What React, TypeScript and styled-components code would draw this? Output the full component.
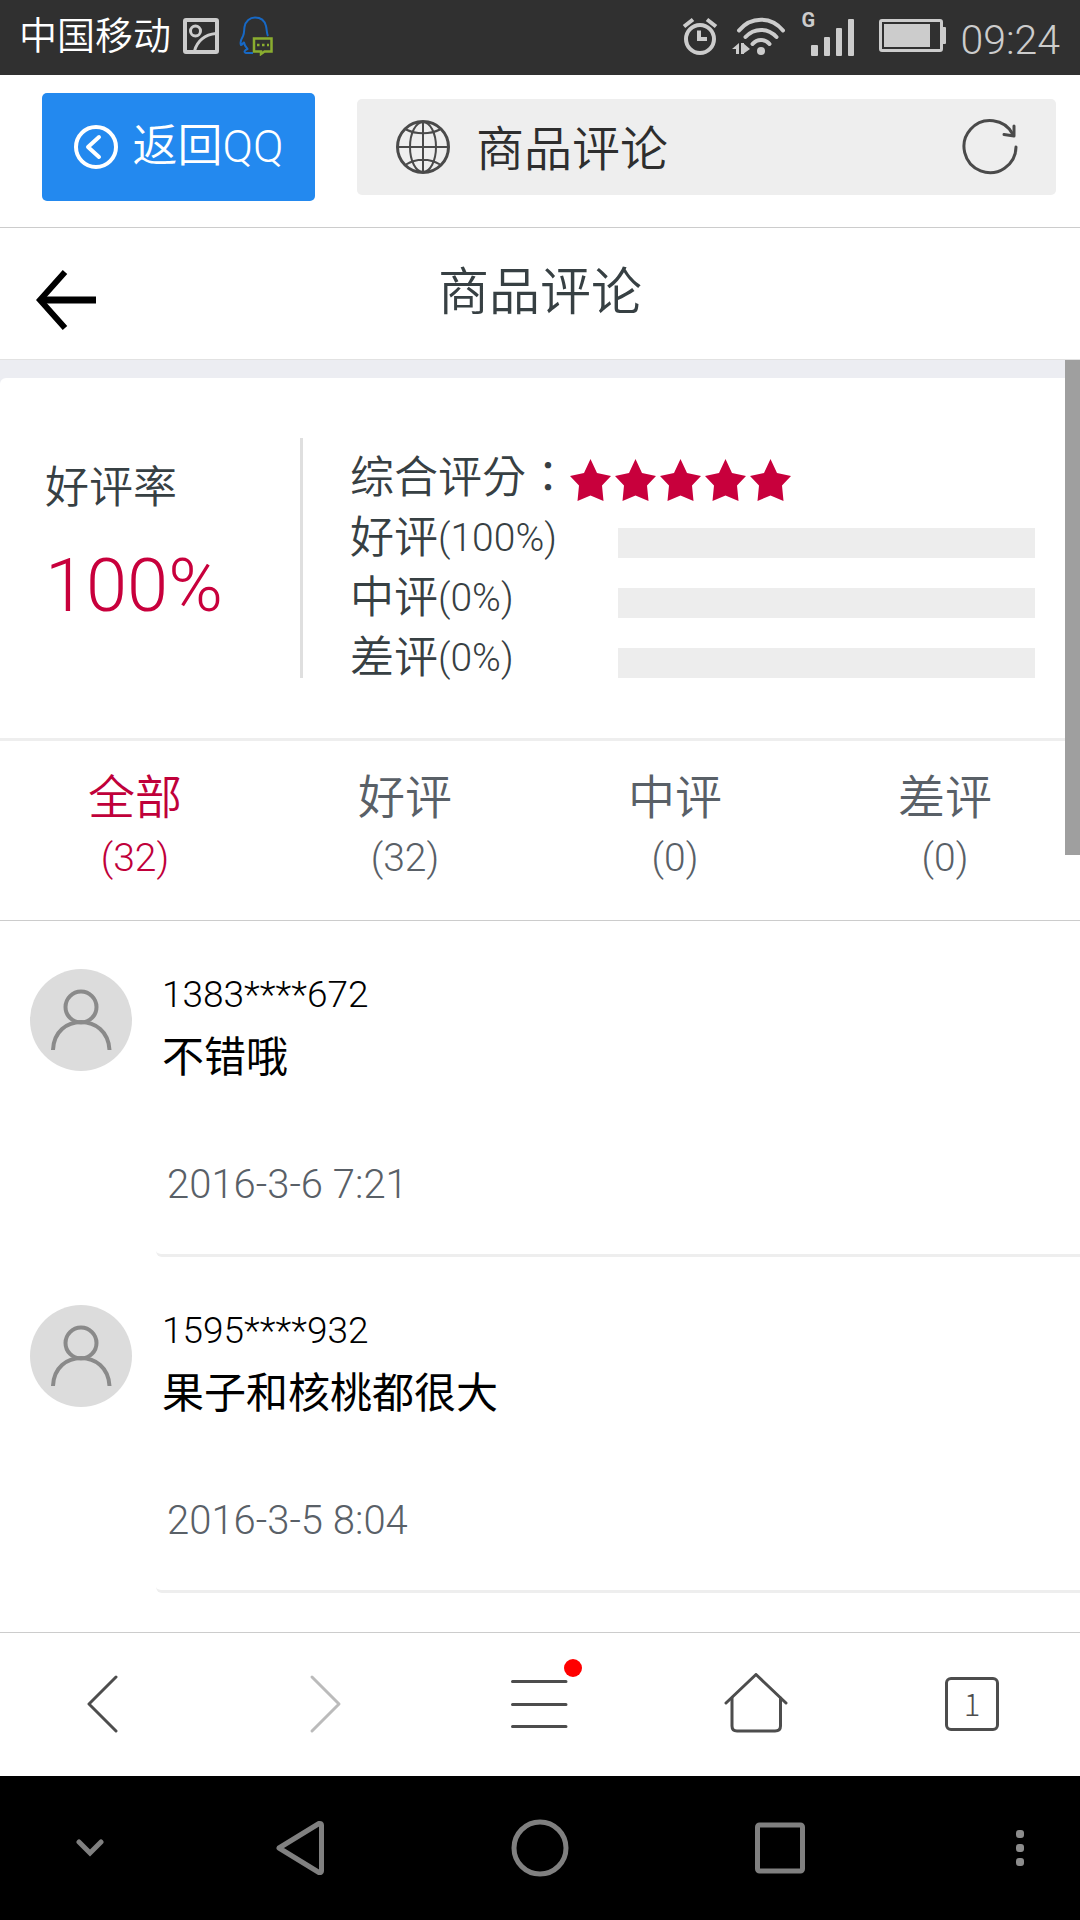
import React, { useState } from "react";
import styled, { createGlobalStyle } from "styled-components";

const GlobalStyle = createGlobalStyle`
  *, *::before, *::after { box-sizing: border-box; }
  body { margin: 0; background: #fff; }
  body, button, input {
    font-family: Roboto, "Noto Sans CJK SC", sans-serif;
    font-weight: 350;
  }
  button { border: 0; padding: 0; margin: 0; background: none; cursor: pointer; color: inherit; }
  h1, p, ul { margin: 0; padding: 0; }
  ul { list-style: none; }
  svg { display: block; flex: none; }
`;

const Screen = styled.div`
  display: flex;
  flex-direction: column;
  min-height: 100vh;
`;

const StatusBar = styled.header`
  display: flex;
  align-items: center;
  justify-content: space-between;
  height: 75px;
  padding: 0 20px 4px 19px;
  background: #303030;
  color: #fff;
`;

const StatusGroup = styled.div<{ $gap: number }>`
  display: flex;
  align-items: center;
  gap: ${(p) => p.$gap}px;
`;

const Carrier = styled.span`
  margin-right: -8px;
  font-size: 38px;
  line-height: 66px;
`;

const Clock = styled.time`
  padding-top: 8px;
  font-size: 41px;
  line-height: 48px;
  color: #ccc;
`;

const BrowserBar = styled.div`
  display: flex;
  align-items: center;
  gap: 42px;
  height: 153px;
  padding: 0 24px 8px 42px;
  border-bottom: 1px solid #ccc;
`;

const BackToQQ = styled.button`
  display: flex;
  align-items: center;
  justify-content: center;
  gap: 15px;
  width: 273px;
  height: 108px;
  border-radius: 5px;
  background: #2389ef;
  color: #fff;
  font-size: 45px;
  line-height: 60px;
`;

const AddressBox = styled.div`
  display: flex;
  flex: 1;
  align-items: center;
  min-width: 0;
  height: 96px;
  padding: 0 38px 0 39px;
  border-radius: 5px;
  background: #eee;
`;

const AddressInput = styled.input`
  flex: 1;
  min-width: 0;
  height: 72px;
  padding: 0 26px 4px;
  border: 0;
  outline: 0;
  background: transparent;
  color: #2e2e2e;
  font-size: 48px;
`;

const PageHeader = styled.div`
  display: grid;
  grid-template-columns: 96px 1fr 96px;
  align-items: center;
  height: 132px;
  border-bottom: 1px solid #e2e2e2;
`;

const BackButton = styled.button`
  display: flex;
  justify-content: flex-end;
  padding-top: 12px;
`;

const PageTitle = styled.h1`
  padding-bottom: 2px;
  color: #374043;
  font-size: 51px;
  font-weight: 350;
  line-height: 72px;
  text-align: center;
`;

const Content = styled.main`
  position: relative;
  flex: 1;
  padding-top: 18px;
  background: linear-gradient(#ecedf2 40px, #fff 40px);
`;

const ScrollThumb = styled.div`
  position: absolute;
  top: 0;
  right: 0;
  width: 15px;
  height: 495px;
  background: #9f9f9f;
`;

const Summary = styled.section`
  display: flex;
  padding: 60px 45px;
  border-bottom: 3px solid #eee;
  border-radius: 6px 0 0 0;
  background: #fff;
  color: #374043;
  font-size: 44px;
`;

const RateBlock = styled.div`
  display: flex;
  flex-direction: column;
  gap: 20px;
  width: 258px;
  padding-top: 20px;
  border-right: 3px solid #dfdfdf;
  line-height: 60px;
`;

const Rate = styled.strong`
  color: #c8003c;
  font-size: 74px;
  font-weight: 350;
  line-height: 96px;
`;

const Breakdown = styled.div`
  display: flex;
  flex: 1;
  flex-direction: column;
  padding-left: 47px;
`;

const BreakdownRow = styled.div`
  display: flex;
  align-items: flex-end;
  height: 60px;
`;

const RowLabel = styled.span`
  display: flex;
  align-items: center;
  flex: 0 0 268px;
  line-height: 40px;
`;

const ScoreLabel = styled.span`
  flex: none;
  font-family: "Noto Sans CJK TC", sans-serif;
  line-height: 48px;
`;

const Share = styled.span`
  font-size: 39px;
`;

const Track = styled.div`
  flex: 1;
  height: 30px;
  background: #ededed;
`;

const Stars = styled.div`
  display: flex;
  gap: 4px;
  margin-bottom: -3px;
`;

const Tabs = styled.nav`
  display: grid;
  grid-template-columns: repeat(4, 1fr);
  height: 180px;
  border-bottom: 1px solid #ccc;
  background: #fff;
`;

const Tab = styled.button<{ $active: boolean }>`
  display: flex;
  flex-direction: column;
  align-items: center;
  padding-top: 27px;
  color: ${(p) => (p.$active ? "#c0003a" : "#596067")};
  font-size: 47px;
  line-height: 60px;
`;

const TabCount = styled.span`
  font-size: 39px;
`;

const ReviewList = styled.ul`
  background: #fff;
`;

const Review = styled.li`
  display: flex;
  gap: 24px;
  padding-left: 30px;
`;

const Avatar = styled.div`
  flex: none;
  width: 102px;
  height: 102px;
  margin-top: 48px;
  border-radius: 50%;
  background: #dcdcdc;
`;

const ReviewBody = styled.div`
  display: flex;
  flex: 1;
  flex-direction: column;
  height: 336px;
  padding: 42px 0 0 6px;
  border-bottom: 3px solid #eee;
  border-radius: 0 0 0 6px;
  color: #000;
`;

const Author = styled.span`
  font-size: 37px;
  line-height: 64px;
`;

const Comment = styled.p`
  font-size: 42px;
  font-weight: 400;
  line-height: 62px;
`;

const PostedAt = styled.time`
  margin-top: 66px;
  padding-left: 5px;
  color: #596067;
  font-size: 40px;
  line-height: 60px;
`;

const ToolBar = styled.nav`
  display: grid;
  grid-template-columns: repeat(5, 1fr);
  height: 144px;
  padding-bottom: 2px;
  border-top: 1px solid #ccc;
  background: #fff;
`;

const ToolButton = styled.button`
  display: flex;
  align-items: center;
  justify-content: center;
`;

const TabCounter = styled.span`
  display: flex;
  align-items: center;
  justify-content: center;
  width: 54px;
  height: 54px;
  padding-bottom: 3px;
  border: 3px solid #4d4d4d;
  border-radius: 6px;
  color: #4d4d4d;
  font-family: "Noto Sans CJK SC", sans-serif;
  font-size: 31px;
  font-weight: 300;
`;

const SystemBar = styled.nav`
  display: grid;
  grid-template-columns: 3fr 4fr 4fr 4fr 3fr;
  height: 144px;
  background: #000;
`;

const SystemButton = styled.button`
  display: flex;
  align-items: center;
  justify-content: center;
`;

const MoreButton = styled(SystemButton)`
  justify-self: end;
  width: 120px;
`;

const PictureIcon = () => (
  <svg width="36" height="36" viewBox="0 0 36 36" fill="none" stroke="#ccc" strokeWidth="3">
    <rect x="2" y="2" width="32" height="32" rx="1" strokeWidth="4" />
    <circle cx="12.500" cy="13" r="5" />
    <path d="M11.500 33C14 23 22 16.500 33 15.500" />
  </svg>
);

const QQIcon = () => (
  <svg width="34" height="40" viewBox="0 0 34 40" fill="none" strokeWidth="2" strokeLinejoin="round">
    <path
      stroke="#1768c4"
      d="M29 20C27.500 17 28 14 27 10C25.500 4 21 1.500 16 1.500S6.500 5 5.500 11C5 14 5.500 17 4 20C2 23.500 0.500 26 2 29C3.500 28.500 4 27 5 26.500C5.500 29.500 6.500 31 8.500 33C5.500 34 4.500 36.500 7 37H14"
    />
    <path stroke="#8aad2f" strokeWidth="2.500" strokeLinejoin="miter" d="M15 22.500H32.500V35.500H25.500L22 38V35.500H15Z" />
    <path stroke="#8aad2f" strokeWidth="2.500" strokeDasharray="2.500 2.500" d="M18 29H30" />
  </svg>
);

const AlarmIcon = () => (
  <svg width="36" height="38" viewBox="0 0 36 38" fill="none" stroke="#ccc" strokeWidth="4">
    <circle cx="18" cy="22" r="14" />
    <path d="M17 13.500V22H25" />
    <path d="M2 9.500L11 2.500M34 9.500L25 2.500" />
  </svg>
);

const WifiIcon = () => (
  <svg width="54" height="38" viewBox="0 0 54 38" fill="none" stroke="#ccc" strokeWidth="4" strokeLinecap="round">
    <path d="M7 13.500C18.500 -1 39.500 -1 51 13.500M13.500 20C22 10.500 36 10.500 44.500 20M20.500 27C25 21.500 33 21.500 37.500 27" />
    <circle cx="29" cy="34" r="4" fill="#ccc" stroke="none" />
    <path fill="#ccc" stroke="none" d="M0 32L7 26V37H4V32ZM9 26H12V37H9ZM11 26L18 32L11 37Z" />
  </svg>
);

const Signal = styled.div`
  display: flex;
  align-items: flex-end;
  height: 44px;
  margin: -4px 10px 0 1px;
  color: #ccc;
`;

const NetworkType = styled.span`
  align-self: flex-start;
  width: 10px;
  font-size: 20px;
  font-weight: 700;
  line-height: 16px;
`;

const SignalIcon = () => (
  <svg width="44" height="38" viewBox="0 0 44 38" fill="#ccc">
    <rect x="0" y="27" width="7" height="11" rx="1" />
    <rect x="13" y="19" width="6" height="19" rx="1" />
    <rect x="25" y="10" width="6" height="28" rx="1" />
    <rect x="37" y="1" width="6" height="37" rx="1" />
  </svg>
);

const BatteryIcon = () => (
  <svg width="67" height="33" viewBox="0 0 67 33">
    <rect x="1.500" y="1.500" width="61" height="30" rx="1.500" fill="none" stroke="#ccc" strokeWidth="3" />
    <rect x="5" y="5" width="46" height="23" fill="#ccc" />
    <rect x="63" y="8" width="4" height="17" rx="1" fill="#ccc" />
  </svg>
);

const CircleBackIcon = () => (
  <svg width="44" height="44" viewBox="0 0 44 44" fill="none" stroke="#fff" strokeWidth="4" strokeLinecap="round" strokeLinejoin="round">
    <circle cx="22" cy="22" r="20" />
    <path d="M25 12L14 22L25 32" />
  </svg>
);

const GlobeIcon = () => (
  <svg width="54" height="54" viewBox="0 0 54 54" fill="none" stroke="#4a4a4a" strokeWidth="2">
    <circle cx="27" cy="27" r="25.500" strokeWidth="3" />
    <ellipse cx="27" cy="27" rx="13" ry="25" />
    <path d="M27 2V52M2 27H52M10 9.500C20 14.500 34 14.500 44 9.500M10 44.500C20 38 34 38 44 44.500" />
  </svg>
);

const RefreshIcon = () => (
  <svg width="56" height="56" viewBox="0 0 56 56" fill="none" stroke="#4a4a4a" strokeWidth="3" strokeLinecap="round" strokeLinejoin="round">
    <path d="M54 28A26 26 0 1 1 51 15.500" />
    <path d="M52 7V17L42 15.500" />
  </svg>
);

const ArrowIcon = () => (
  <svg width="60" height="60" viewBox="0 0 60 60" fill="none" stroke="#000" strokeWidth="6">
    <path d="M29 2L4 30L29 58" />
    <path d="M4 30H60" strokeWidth="7" />
  </svg>
);

const StarIcon = () => (
  <svg width="41" height="42" viewBox="0 0 41 42" fill="#c8003c">
    <path d="M20.500 0L27 14L41 17L32 26.500L33.500 42L20.500 36.500L7.500 42L9 26.500L0 17L14 14Z" />
  </svg>
);

const PersonIcon = () => (
  <svg width="102" height="102" viewBox="0 0 102 102" fill="none" stroke="#8a8a8a" strokeWidth="4">
    <circle cx="51" cy="38" r="15.500" />
    <path d="M23 81C24 43.500 78 43.500 79.500 81" />
  </svg>
);

const ChevronIcon = ({ forward = false }: { forward?: boolean }) => (
  <svg width="42" height="60" viewBox="0 0 42 60" fill="none" stroke={forward ? "#bbb" : "#4d4d4d"} strokeWidth="3" strokeLinecap="round" strokeLinejoin="round">
    <path d={forward ? "M9 3L36 30L9 57" : "M29 3L2 30L29 57"} />
  </svg>
);

const MenuIcon = () => (
  <svg width="58" height="90" viewBox="0 0 58 90" fill="none" stroke="#4d4d4d" strokeWidth="3" strokeLinecap="round" overflow="visible">
    <path d="M1.500 22.500H55M1.500 45.500H55M1.500 67.500H55" />
    <circle cx="62" cy="9" r="9" fill="#f00" stroke="none" />
  </svg>
);

const HomeIcon = () => (
  <svg width="64" height="62" viewBox="0 0 64 62" fill="none" stroke="#4d4d4d" strokeWidth="3" strokeLinecap="round" strokeLinejoin="round">
    <path d="M2 30L32 1.500L62 30" />
    <path d="M8 25V53Q8 58 13 58H51Q56.500 58 56.500 53V25" />
  </svg>
);

const HideIcon = () => (
  <svg width="28" height="18" viewBox="0 0 28 18" fill="none" stroke="#808080" strokeWidth="5" strokeLinecap="round">
    <path d="M3 3L14 14L25 3" />
  </svg>
);

const TriangleIcon = () => (
  <svg width="48" height="56" viewBox="0 0 48 56" fill="none" stroke="#808080" strokeWidth="5" strokeLinejoin="round">
    <path d="M3 28L43 3.500Q45.500 3 45.500 5V51Q45.500 53 43 52.500Z" />
  </svg>
);

const CircleIcon = () => (
  <svg width="58" height="58" viewBox="0 0 58 58" fill="none" stroke="#808080" strokeWidth="5">
    <circle cx="29" cy="29" r="26" />
  </svg>
);

const SquareIcon = () => (
  <svg width="50" height="52" viewBox="0 0 50 52" fill="none" stroke="#808080" strokeWidth="5">
    <rect x="2.500" y="3" width="45" height="46" rx="2" />
  </svg>
);

const MoreIcon = () => (
  <svg width="8" height="36" viewBox="0 0 8 36" fill="#8c8c8c">
    <rect width="8" height="8" rx="3" />
    <rect y="14" width="8" height="8" rx="3" />
    <rect y="28" width="8" height="8" rx="3" />
  </svg>
);

const shares = [
  { name: "好评", share: 100 },
  { name: "中评", share: 0 },
  { name: "差评", share: 0 },
];

const tabs = [
  { name: "全部", count: 32 },
  { name: "好评", count: 32 },
  { name: "中评", count: 0 },
  { name: "差评", count: 0 },
];

const reviews = [
  { author: "1383****672", text: "不错哦", date: "2016-3-6 7:21" },
  { author: "1595****932", text: "果子和核桃都很大", date: "2016-3-5 8:04" },
];

export default function App() {
  const [active, setActive] = useState(0);

  return (
    <Screen>
      <GlobalStyle />
      <StatusBar>
        <StatusGroup $gap={20}>
          <Carrier>中国移动</Carrier>
          <PictureIcon />
          <QQIcon />
        </StatusGroup>
        <StatusGroup $gap={14}>
          <AlarmIcon />
          <WifiIcon />
          <Signal>
            <NetworkType>G</NetworkType>
            <SignalIcon />
          </Signal>
          <BatteryIcon />
          <Clock>09:24</Clock>
        </StatusGroup>
      </StatusBar>

      <BrowserBar>
        <BackToQQ type="button">
          <CircleBackIcon />
          返回QQ
        </BackToQQ>
        <AddressBox>
          <GlobeIcon />
          <AddressInput type="text" aria-label="网址" defaultValue="商品评论" />
          <button type="button" aria-label="刷新">
            <RefreshIcon />
          </button>
        </AddressBox>
      </BrowserBar>

      <PageHeader>
        <BackButton type="button" aria-label="返回">
          <ArrowIcon />
        </BackButton>
        <PageTitle>商品评论</PageTitle>
      </PageHeader>

      <Content>
        <Summary>
          <RateBlock>
            <span>好评率</span>
            <Rate>100%</Rate>
          </RateBlock>
          <Breakdown>
            <BreakdownRow>
              <ScoreLabel>综合评分：</ScoreLabel>
              <Stars>
                {[1, 2, 3, 4, 5].map((n) => (
                  <StarIcon key={n} />
                ))}
              </Stars>
            </BreakdownRow>
            {shares.map((row) => (
              <BreakdownRow key={row.name}>
                <RowLabel>
                  {row.name}
                  <Share>({row.share}%)</Share>
                </RowLabel>
                <Track />
              </BreakdownRow>
            ))}
          </Breakdown>
        </Summary>

        <Tabs>
          {tabs.map((tab, i) => (
            <Tab key={tab.name} type="button" $active={i === active} onClick={() => setActive(i)}>
              {tab.name}
              <TabCount>({tab.count})</TabCount>
            </Tab>
          ))}
        </Tabs>

        <ReviewList>
          {reviews.map((review) => (
            <Review key={review.author}>
              <Avatar>
                <PersonIcon />
              </Avatar>
              <ReviewBody>
                <Author>{review.author}</Author>
                <Comment>{review.text}</Comment>
                <PostedAt>{review.date}</PostedAt>
              </ReviewBody>
            </Review>
          ))}
        </ReviewList>
        <ScrollThumb />
      </Content>

      <ToolBar>
        <ToolButton type="button" aria-label="后退">
          <ChevronIcon />
        </ToolButton>
        <ToolButton type="button" aria-label="前进">
          <ChevronIcon forward />
        </ToolButton>
        <ToolButton type="button" aria-label="菜单">
          <MenuIcon />
        </ToolButton>
        <ToolButton type="button" aria-label="主页">
          <HomeIcon />
        </ToolButton>
        <ToolButton type="button" aria-label="窗口">
          <TabCounter>1</TabCounter>
        </ToolButton>
      </ToolBar>

      <SystemBar>
        <SystemButton type="button" aria-label="隐藏导航栏">
          <HideIcon />
        </SystemButton>
        <SystemButton type="button" aria-label="系统返回">
          <TriangleIcon />
        </SystemButton>
        <SystemButton type="button" aria-label="桌面">
          <CircleIcon />
        </SystemButton>
        <SystemButton type="button" aria-label="最近任务">
          <SquareIcon />
        </SystemButton>
        <MoreButton type="button" aria-label="更多">
          <MoreIcon />
        </MoreButton>
      </SystemBar>
    </Screen>
  );
}
